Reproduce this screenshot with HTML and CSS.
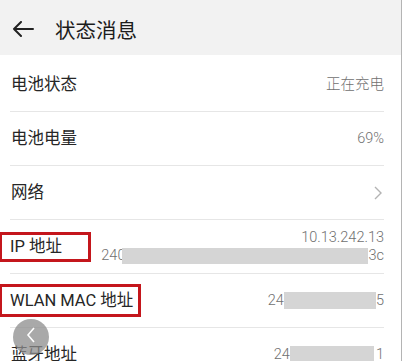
FILE: index.html
```html
<!DOCTYPE html>
<html lang="zh-CN">
<head>
  <meta charset="UTF-8" />
  <meta name="viewport" content="width=device-width, initial-scale=1.0" />
  <title>状态消息</title>
  <link rel="stylesheet" href="styles.css">
</head>
<body>
  <div class="page">
    <div class="header">
      <svg class="back-arrow" width="22" height="16" viewBox="0 0 22 16">
        <path d="M21 8H2M9 1L2 8L9 15" fill="none" stroke="#222" stroke-width="2" stroke-linecap="round" stroke-linejoin="round" />
      </svg>
      <div class="title">状态消息</div>
    </div>
    <div class="list">
      <div class="row">
        <span class="label">电池状态</span>
        <span class="value">正在充电</span>
      </div>
      <div class="row">
        <span class="label">电池电量</span>
        <span class="value">69%</span>
      </div>
      <div class="row">
        <span class="label">网络</span>
        <svg class="chevron" width="10" height="14" viewBox="0 0 10 14">
          <path d="M2 1L8 7L2 13" fill="none" stroke="#b3b3b3" stroke-width="1.4" />
        </svg>
      </div>
      <div class="row">
        <span class="label marked marked-ip">IP 地址</span>
        <div class="value value-stack">
          <span>10.13.242.13</span>
          <span>240<span class="redact redact-ip"></span>3c</span>
        </div>
      </div>
      <div class="row">
        <span class="label marked marked-mac">WLAN MAC 地址</span>
        <span class="value">24:<span class="redact redact-mac"></span>5</span>
      </div>
      <div class="row">
        <span class="label">蓝牙地址</span>
        <span class="value">24:<span class="redact redact-bt"></span>1</span>
      </div>
    </div>
    <div class="float-back">
      <svg width="10" height="16" viewBox="0 0 10 16">
        <path d="M8 1L2 8L8 15" fill="none" stroke="#fff" stroke-width="1.6" />
      </svg>
    </div>
  </div>
</body>
</html>
```

FILE: styles.css
```css
body {
  margin: 0;
  background: white;
  font-family: Roboto, "Noto Sans CJK SC", sans-serif;
  overflow: hidden;
}
.page {
  position: relative;
  width: 401px;
  height: 361px;
  border-right: 1px solid #b4b4b4;
  overflow: hidden;
}
.header {
  height: 55px;
  background: #f2f2f2;
  display: flex;
  align-items: center;
  padding-left: 12px;
  margin-bottom: 3px;
}
.back-arrow {
  display: block;
  margin-top: 3px;
}
.title {
  font-family: "Noto Sans CJK SC", sans-serif;
  font-size: 20.5px;
  color: #1c1c1c;
  margin-left: 21px;
  margin-top: 2px;
}
.list {
  display: flex;
  flex-direction: column;
}
.row {
  height: 53px;
  margin: 0 17px 0 10px;
  border-bottom: 1px solid #e6e6e6;
  display: flex;
  align-items: center;
  justify-content: space-between;
  flex-shrink: 0;
}
.label {
  font-size: 16.5px;
  color: #262626;
  line-height: 22px;
  padding-left: 1px;
}
.marked {
  border: 3px solid #c4161c;
  margin-left: -11px;
  padding-left: 8px;
}
.marked-ip {
  padding-top: 1px;
  padding-bottom: 1px;
  padding-right: 26px;
  margin-top: 1px;
}
.marked-mac {
  padding-top: 3px;
  padding-bottom: 2px;
  padding-right: 5px;
}
.value {
  font-size: 14.5px;
  font-weight: 300;
  color: #707070;
  line-height: 18px;
  display: flex;
  align-items: center;
}
.value-stack {
  flex-direction: column;
  align-items: flex-end;
}
.value-stack span {
  display: flex;
  align-items: center;
}
.redact {
  display: inline-block;
  background: #d5d5d5;
}
.redact-ip {
  width: 246px;
  height: 16px;
  margin-left: -3px;
}
.redact-mac {
  width: 92px;
  height: 17px;
  margin-left: -3px;
}
.redact-bt {
  width: 84px;
  height: 17px;
  margin-left: -3px;
  margin-right: 2px;
}
.chevron {
  display: block;
  margin-right: 1px;
}
.float-back {
  position: absolute;
  left: 13px;
  top: 319px;
  width: 36px;
  height: 36px;
  border-radius: 50%;
  background: rgba(140, 140, 140, 0.75);
  display: flex;
  align-items: center;
  justify-content: center;
}
.float-back svg {
  display: block;
  margin-top: -4px;
}
```
